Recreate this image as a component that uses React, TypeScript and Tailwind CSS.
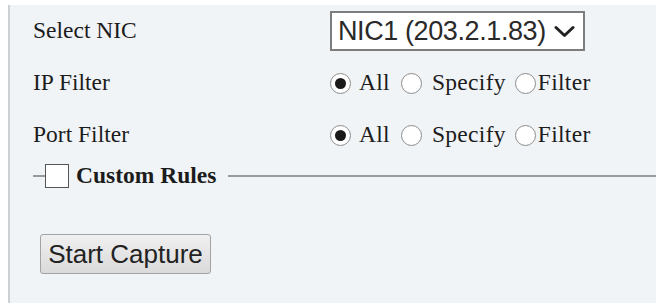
import React from 'react';

const serif = { fontFamily: '"Liberation Serif", "Times New Roman", serif' };
const sans = { fontFamily: '"Liberation Sans", Arial, sans-serif' };

interface RadioProps {
    checked?: boolean;
}

const Radio = ({ checked }: RadioProps) => (
    <span className="flex h-[21px] w-[21px] shrink-0 items-center justify-center rounded-full border-[1.5px] border-[#8c8c8c] bg-white">
        {checked && <span className="h-[11px] w-[11px] rounded-full bg-[#1a1a1a]" />}
    </span>
);

const RadioGroup = () => (
    <div className="flex items-center text-[23.5px] tracking-[0.3px] text-[#1c1c1c]" style={serif}>
        <Radio checked />
        <span className="ml-[8px]">All</span>
        <span className="ml-[11px]"><Radio /></span>
        <span className="ml-[10px]">Specify</span>
        <span className="ml-[9px]"><Radio /></span>
        <span className="ml-[2px]">Filter</span>
    </div>
);

export default function App() {
    return (
        <div className="h-[303px] w-[662px] bg-white pl-[8px] pr-[6px] pt-[5px]">
            <div className="h-full border-l-2 border-[#cdd1d5] bg-[#f1f4f7] pl-[23px]">
                <div className="grid grid-cols-[297px_1fr] text-[#1c1c1c]">
                    <div className="flex h-[52px] items-center text-[23.5px]" style={serif}>Select NIC</div>
                    <div className="flex h-[52px] items-center">
                        <div className="flex h-[40px] w-[255px] items-center justify-between border-2 border-[#7d7d7d] bg-white pl-[6px] pr-[8px]">
                            <span className="text-[27px] leading-none tracking-[-0.4px] text-[#2a2a2a]" style={sans}>NIC1 (203.2.1.83)</span>
                            <svg width="21" height="13" viewBox="0 0 21 13" fill="none">
                                <path d="M2 2.5 L10.5 10.5 L19 2.5" stroke="#222" strokeWidth="3" strokeLinecap="round" strokeLinejoin="round" />
                            </svg>
                        </div>
                    </div>

                    <div className="flex h-[52px] items-center text-[23.5px]" style={serif}>IP Filter</div>
                    <div className="flex h-[52px] items-center">
                        <RadioGroup />
                    </div>

                    <div className="flex h-[52px] items-center text-[23.5px]" style={serif}>Port Filter</div>
                    <div className="flex h-[52px] items-center">
                        <RadioGroup />
                    </div>
                </div>

                <div className="flex h-[30px] items-center">
                    <div className="h-[2px] w-[12px] bg-[#9a9a9a]" />
                    <div className="h-[24px] w-[24px] border-[1.5px] border-[#555] bg-white" />
                    <span className="ml-[7px] text-[23.5px] font-bold text-[#1c1c1c]" style={serif}>Custom Rules</span>
                    <div className="ml-[12px] h-[2px] flex-1 bg-[#9a9a9a]" />
                </div>

                <button
                    className="ml-[7px] mt-[43px] flex h-[40px] w-[171px] items-center justify-center rounded-[3px] border border-[#a3a3a3] bg-gradient-to-b from-[#f0f0f0] to-[#dadada] text-[26px] text-[#222]"
                    style={sans}
                >
                    Start Capture
                </button>
            </div>
        </div>
    );
}
